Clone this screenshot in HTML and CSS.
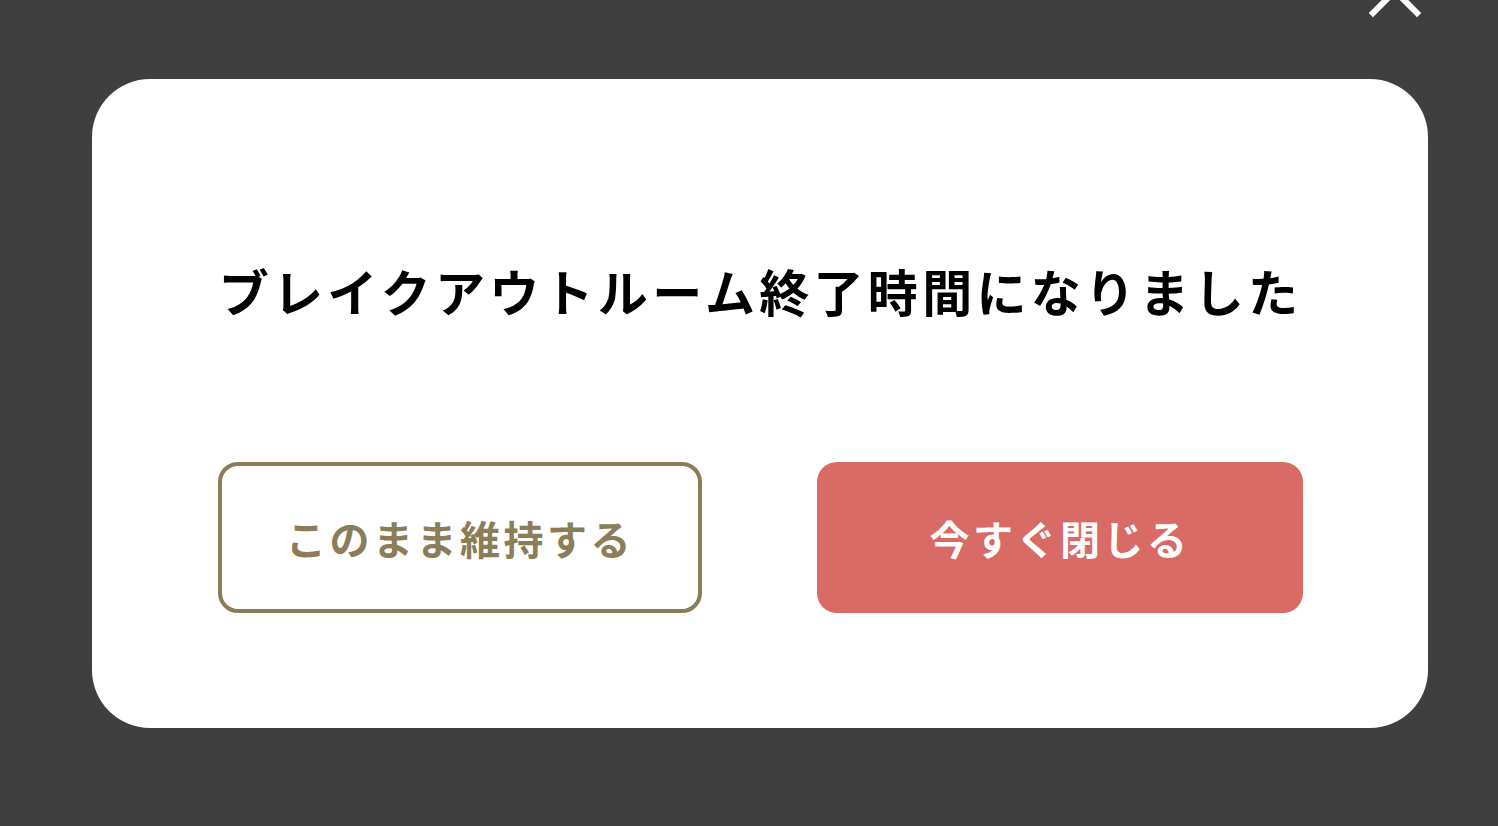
FILE: index.html
```html
<!DOCTYPE html>
<html lang="ja">
<head>
    <meta charset="UTF-8">
    <title>ブレイクアウトルーム</title>
    <link rel="stylesheet" href="styles.css">
</head>
<body>
    <button class="close-btn" aria-label="閉じる">
        <svg width="60" height="60" viewBox="0 0 60 60">
            <path d="M8 8 L52 52 M52 8 L8 52" stroke="#fff" stroke-width="6" stroke-linecap="square" fill="none"/>
        </svg>
    </button>
    <div class="dialog">
        <h1 class="dialog-title">ブレイクアウトルーム終了時間になりました</h1>
        <div class="dialog-actions">
            <button class="btn btn-outline">このまま維持する</button>
            <button class="btn btn-primary">今すぐ閉じる</button>
        </div>
    </div>
</body>
</html>
```

FILE: styles.css
```css
* { box-sizing: border-box; }
body {
    margin: 0;
    height: 100vh;
    overflow: hidden;
    background: #3f3f3f;
    font-family: "Noto Sans CJK JP", "Noto Sans", sans-serif;
    padding: 79px 0 0 92px;
}
.close-btn {
    position: absolute;
    top: -39px;
    right: 73px;
    padding: 0;
    border: 0;
    background: none;
    cursor: pointer;
}
.dialog {
    width: 1336px;
    height: 649px;
    background: #fff;
    border-radius: 58px;
    padding: 176px 125px 0 126px;
}
.dialog-title {
    margin: 0;
    text-align: center;
    font-size: 50px;
    line-height: 70px;
    font-weight: 700;
    letter-spacing: 4.3px;
    color: #000;
}
.dialog-actions {
    display: grid;
    grid-template-columns: 484px 486px;
    column-gap: 115px;
    margin-top: 137px;
}
.btn {
    height: 151px;
    border-radius: 20px;
    font-family: inherit;
    font-size: 40px;
    font-weight: 700;
    letter-spacing: 3.5px;
    cursor: pointer;
}
.btn-outline {
    background: #fff;
    border: 4px solid #8b7d58;
    color: #8b7d58;
}
.btn-primary {
    background: #d96b67;
    border: 0;
    color: #fff;
}
```
